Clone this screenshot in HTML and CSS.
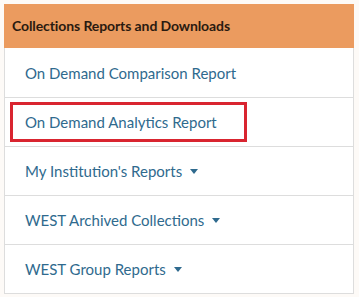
FILE: index.html
```html
<!DOCTYPE html>
<html lang="en">
<head>
    <meta charset="UTF-8">
    <title>Collections Reports and Downloads</title>
    <link rel="stylesheet" href="styles.css">
</head>
<body>
    <div class="panel">
        <div class="panel-heading">Collections Reports and Downloads</div>
        <ul class="report-list">
            <li class="report-item"><a href="#">On Demand Comparison Report</a></li>
            <li class="report-item"><a href="#" class="highlight">On Demand Analytics Report</a></li>
            <li class="report-item"><a href="#" class="dropdown">My Institution's Reports</a></li>
            <li class="report-item"><a href="#" class="dropdown">WEST Archived Collections</a></li>
            <li class="report-item"><a href="#" class="dropdown">WEST Group Reports</a></li>
        </ul>
    </div>
</body>
</html>
```

FILE: styles.css
```css
body {
    margin: 0;
    padding: 4px 5px 3px 4px;
    background-color: #fdfaf7; /* faint cream page */
    font-family: Lato, "Open Sans", sans-serif;
}
.panel {
    border: 1px solid #dddddd;
    border-top: none;
    background-color: #ffffff;
}
.panel-heading {
    background-color: #eb9b5f;
    color: #2a1a10;
    font-weight: bold;
    font-size: 14px;
    letter-spacing: -0.1px;
    height: 44px;
    line-height: 44px;
    padding-left: 8px;
    margin: 0 -1px;
}
.report-list {
    list-style: none;
    margin: 0;
    padding: 0;
}
.report-item {
    height: 48px;
    display: flex;
    align-items: center;
    border-top: 1px solid #dddddd;
    padding-left: 5px;
}
.report-item:first-child {
    border-top: none;
    height: 49px;
}
.report-item a {
    color: #2f6a8e;
    text-decoration: none;
    font-size: 15px;
    padding: 8px 27px 8px 12px;
    border: 3px solid transparent;
}
.report-item a.highlight {
    border-color: #d92530; /* red callout box */
}
.dropdown::after {
    content: "";
    display: inline-block;
    margin-left: 8px;
    vertical-align: 3px;
    border-top: 5px solid currentColor;
    border-left: 4px solid transparent;
    border-right: 4px solid transparent;
}
```
